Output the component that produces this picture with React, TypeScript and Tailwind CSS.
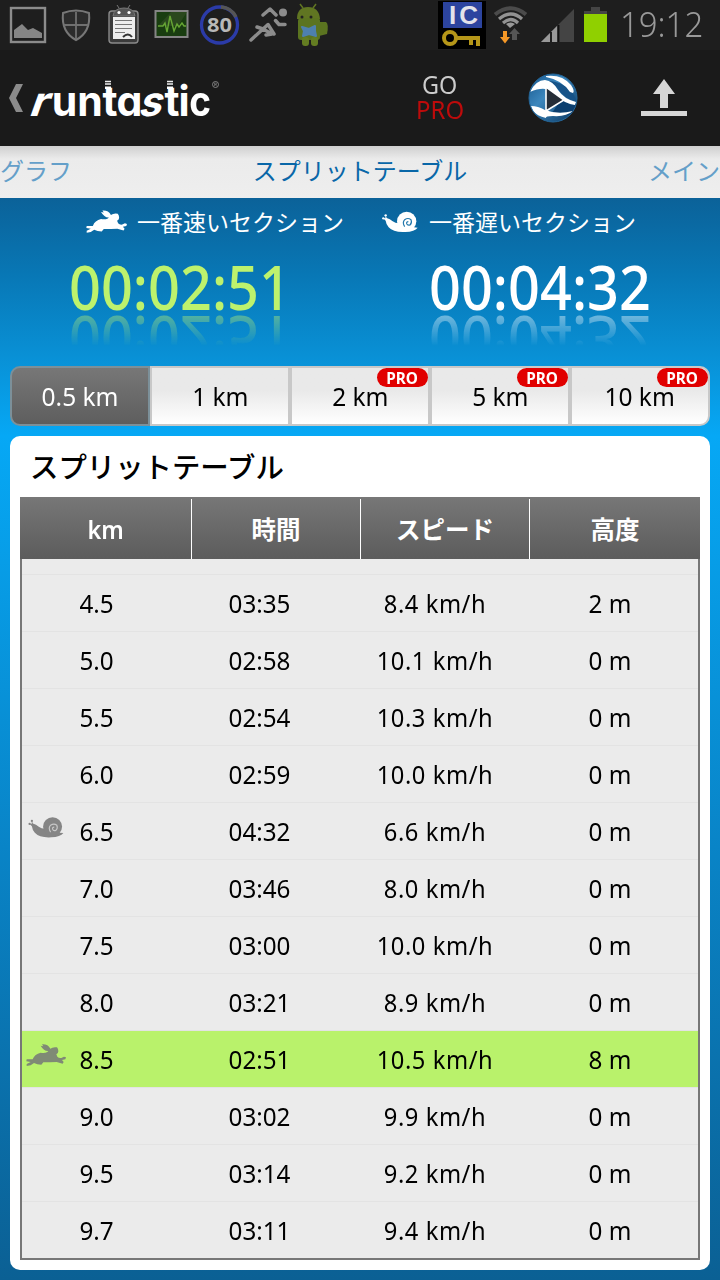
import React from "react";

const rows: [string, string, string, string][] = [
  ["4.5", "03:35", "8.4 km/h", "2 m"],
  ["5.0", "02:58", "10.1 km/h", "0 m"],
  ["5.5", "02:54", "10.3 km/h", "0 m"],
  ["6.0", "02:59", "10.0 km/h", "0 m"],
  ["6.5", "04:32", "6.6 km/h", "0 m"],
  ["7.0", "03:46", "8.0 km/h", "0 m"],
  ["7.5", "03:00", "10.0 km/h", "0 m"],
  ["8.0", "03:21", "8.9 km/h", "0 m"],
  ["8.5", "02:51", "10.5 km/h", "8 m"],
  ["9.0", "03:02", "9.9 km/h", "0 m"],
  ["9.5", "03:14", "9.2 km/h", "0 m"],
  ["9.7", "03:11", "9.4 km/h", "0 m"],
];

const segments = ["0.5 km", "1 km", "2 km", "5 km", "10 km"];

function Hare({ className }: { className: string }) {
  return (
    <svg viewBox="0 0 120 66" className={className} fill="currentColor">
      <path d="M44 5 L52 7 L48 1 Q66 0 73 14 Q80 8 93 10 Q97 14 97 22 Q97 28 91 31 L94 38 Q98 43 106 42 L114 38 L120 40 L118 46 L108 48 L113 54 L110 59 L92 54 L72 55 L52 55 L46 62 L34 61 L24 57 L14 64 L2 66 L2 60 L14 54 L1 52 L2 46 L20 46 Q26 30 44 26 Q56 28 64 24 L67 21 Q54 22 44 5 Z" />
    </svg>
  );
}

function Snail({ className, spiral }: { className: string; spiral: string }) {
  return (
    <svg viewBox="0 0 108 64" className={className} fill="currentColor">
      <circle cx="4" cy="21" r="3.5" />
      <circle cx="11" cy="12" r="3.5" />
      <path d="M3 20 L10 21 L11 12 L14 20 Q24 22 32 30 Q40 36 50 36 L96 48 L107 49 Q98 61 70 62 Q34 64 20 48 Q12 38 11 28 Z" />
      <circle cx="74" cy="30" r="29" />
      <path d="M68 46 Q60 34 68 25 Q78 18 87 25 Q91 34 84 41 Q76 43 74 37 Q73 31 79 31" fill="none" stroke={spiral} strokeWidth="3.5" />
    </svg>
  );
}

function StatusBar() {
  return (
    <div className="flex h-[50px] items-center bg-[#1e1e1e]">
      <svg width="340" height="50" viewBox="0 0 340 50" className="shrink-0">
        <rect x="11" y="8" width="34" height="34" fill="none" stroke="#8c8c8c" strokeWidth="2.4" />
        <path d="M14 38V30L22 24L28 30L33 28L42 33V38Z" fill="#858585" />
        <path d="M63 13Q76 8 89 13Q91 32 76 40Q61 32 63 13Z" fill="#2c2c2c" stroke="#777" strokeWidth="2" />
        <path d="M76 12V39M64 25H88" stroke="#707070" strokeWidth="1.8" />
        <rect x="109" y="11" width="29" height="32" rx="3" fill="#3b3b3b" stroke="#8a8a8a" strokeWidth="1.4" />
        <path d="M113 16Q114 8 124 8Q134 8 135 16Z" fill="#555" stroke="#777" />
        <path d="M117 5L119 8M130 5L128 8" stroke="#777" />
        <circle cx="119" cy="12.5" r="1.6" fill="#fff" /><circle cx="129" cy="12.5" r="1.6" fill="#fff" />
        <rect x="113" y="17" width="22" height="22" fill="#eee" />
        <path d="M115 20.500H132M115 24.500H132M115 28.500H132M115 32.500H125" stroke="#777" strokeWidth="1" />
        <path d="M123 37Q128 32 132 37" stroke="#333" strokeWidth="2" fill="none" />
        <rect x="155.500" y="11" width="32" height="26" fill="#193d10" stroke="#858585" strokeWidth="2" />
        <path d="M171 12H187L178 26H158Z" fill="#355027" opacity=".6" />
        <path d="M158 26H163L165 23L167 32L170 16L174 31L177 24L179 27L182 23L184 26H186" fill="none" stroke="#66a534" strokeWidth="1.4" />
        <circle cx="219.500" cy="25" r="18" fill="none" stroke="#2b3ba8" strokeWidth="3.3" />
        <path d="M221 7A18 18 0 0 1 236 17" fill="none" stroke="#555" strokeWidth="3.3" />
        <text x="219.500" y="32" textAnchor="middle" fill="#b8b8b8" fontFamily="Noto Sans" fontWeight="700" fontSize="20" textLength="25" lengthAdjust="spacingAndGlyphs">80</text>
        <circle cx="283" cy="12.500" r="4" fill="#8c8c8c" />
        <path d="M263 15L270 9L276 15M275.500 20.500L279 24.500H285M251 40L263 29M257 27L263 29L272 34L266 35M263 29L268 24.500L274 34" fill="none" stroke="#8c8c8c" strokeWidth="3.500" strokeLinejoin="round" strokeLinecap="round" />
        <path d="M297 19Q297 7 308 7Q319 7 320 19Z" fill="#607522" />
        <path d="M300 4L303 8M316 4L313 8" stroke="#607522" strokeWidth="1.5" />
        <rect x="298" y="18" width="22" height="22" rx="3" fill="#5b7420" />
        <path d="M320 22H326Q329 24 327 34L319 36Z" fill="#5b7420" />
        <rect x="302" y="37" width="7" height="9" rx="3" fill="#647d22" /><rect x="311" y="37" width="7" height="9" rx="3" fill="#647d22" />
        <path d="M302 27L309 29L315 26L315 31L316 36L309 34L303 36L304 31Z" fill="#4e80ae" stroke="#4e80ae" strokeWidth="2" strokeLinejoin="round" />
        <circle cx="302" cy="17" r="1.500" fill="#222" /><circle cx="311" cy="17" r="1.500" fill="#222" />
      </svg>
      <svg width="184" height="50" viewBox="434 0 184 50" className="ml-[94px] shrink-0">
        <rect x="438" y="1" width="48" height="48" fill="#000" />
        <rect x="443" y="2" width="39" height="26" fill="#2c449f" />
        <text x="449" y="24" fill="#e2e2ea" fontFamily="Liberation Sans" fontWeight="700" fontSize="26" textLength="29">IC</text>
        <circle cx="450" cy="38" r="6" fill="none" stroke="#b59619" strokeWidth="4" />
        <path d="M456 38H478V46M471 38V45" fill="none" stroke="#b59619" strokeWidth="4" />
        <path d="M495 14.500Q511 2 526 14.500" fill="none" stroke="#4b4b4b" strokeWidth="4" />
        <path d="M499 19Q511 9 522 19M503 23Q511 16 518 23" fill="none" stroke="#929292" strokeWidth="3.200" />
        <path d="M506 24Q511 21 515 24L510 28Z" fill="#999" />
        <path d="M503 31H507V37H510L505 43.500L500 37H503Z" fill="#f59827" />
        <path d="M512 40V34H509L514.500 28L520 34H517V40Z" fill="#555" />
        <path d="M574 9V42H541Z" fill="#444" />
        <path d="M557 26V42H541Z" fill="#999" />
        <path d="M551 32V42M558.500 25V42" stroke="#111" strokeWidth="1.8" />
        <path d="M584 14V11H591V7H600V11H607V14Z" fill="#444" /><path d="M584 14H607V42H584Z" fill="#90d000" />
      </svg>
      <span className="relative -top-px ml-[2px] origin-left scale-x-[0.94] font-['Noto_Sans',sans-serif] text-[35px] font-[350] leading-[50px] whitespace-nowrap text-[#999]">19:12</span>
    </div>
  );
}

function Header() {
  return (
    <header className="flex h-24 items-center bg-[#1a1a1a]">
      <svg width="14" height="30" viewBox="0 0 14 30" className="ml-[9px] shrink-0"><path d="M7 1H14L7 15L14 29H7L0 15Z" fill="#8b8b8b" /></svg>
      <div className="relative ml-[9px] h-24 w-[190px]">
        <div className="flex pt-[16px] font-['Inter',sans-serif] text-[41px] font-bold leading-[70px] whitespace-nowrap text-white [font-feature-settings:'cv11']">
          <span className="flex w-[20px] justify-center"><span className="-skew-x-[18deg] scale-x-110">r</span></span>
          <span className="flex w-[25px] justify-center">u</span>
          <span className="flex w-[26px] justify-center">n</span>
          <span className="flex w-[14px] justify-center">t</span>
          <span className="flex w-[25px] justify-center">a</span>
          <span className="flex w-[23px] justify-center"><span className="-skew-x-[18deg]">s</span></span>
          <span className="flex w-[14px] justify-center">t</span>
          <span className="flex w-[10px] justify-center">i</span>
          <span className="flex w-[22px] justify-center"><span className="scale-x-90">c</span></span>
        </div>
        <svg width="190" height="96" viewBox="32 50 190 96" className="absolute top-0 left-0">
          <path d="M105 81.500H111M105 84H111M167 81.500H173M167 84H173" stroke="#eee" strokeWidth="1.400" />
          <path d="M105 86.500H111V89H105ZM167 86.500H173V89H167Z" fill="#fff" />
          <circle cx="215.500" cy="84.500" r="3" fill="none" stroke="#999" strokeWidth=".8" />
          <path d="M214.500 86V83H216.300L216.500 84.500H215L216.800 86" fill="none" stroke="#999" strokeWidth=".5" />
        </svg>
      </div>
      <div className="ml-[168px] flex w-[100px] flex-col items-center pb-[2px] font-['Noto_Sans',sans-serif] text-[26px] leading-[25px]">
        <span className="scale-x-[0.9] text-[#ccc]">GO</span>
        <span className="scale-x-[0.92] text-[#bd0b0b]">PRO</span>
      </div>
      <svg width="50" height="50" viewBox="0 0 50 50" className="ml-[38px] shrink-0">
        <defs>
          <linearGradient id="ball" x1="0" y1="0" x2="1" y2="1"><stop offset="0" stopColor="#16558c" /><stop offset=".4" stopColor="#3c87bd" /><stop offset="1" stopColor="#07345f" /></linearGradient>
          <clipPath id="disc"><circle cx="25" cy="25" r="23.500" /></clipPath>
        </defs>
        <circle cx="25" cy="25" r="24" fill="url(#ball)" stroke="#25679a" strokeWidth="1" />
        <g clipPath="url(#disc)">
          <path d="M20 8Q36 8 46 22L49 29Q36 26 28 14Z" fill="#175388" />
          <path d="M34 25Q44 36 50 30L46 42Q34 42 24 40Z" fill="#0b3e6e" />
          <path d="M2 19Q8 7 17 7Q25 8 30 17Q36 26 48 29L47 32Q37 31 29 23Q20 11 2 19Z" fill="#fff" />
          <path d="M18 3Q34 1 43 12Q47 18 45 20L42 19Q34 7 18 4Z" fill="#fff" />
          <path d="M3 33Q10 33 17 37Q30 42 45 38Q38 44 25 43Q17 43 18 45Q9 43 5 38Z" fill="#fff" />
        </g>
        <path d="M18 14L36 27L18 38Z" fill="#252d37" stroke="#fff" strokeWidth="1.600" />
      </svg>
      <svg width="46" height="38" viewBox="0 0 46 38" className="ml-[63px] shrink-0"><path d="M23 0L34 15H27V29H19V15H12ZM0 32H46V37H0Z" fill="#d6d6d6" /></svg>
    </header>
  );
}

function Best({ label, time, fast }: { label: string; time: string; fast?: boolean }) {
  return (
    <div className="flex w-[360px] flex-col">
      <div className={fast ? "flex h-[48px] items-center pl-[86px]" : "flex h-[48px] items-center pl-[22px]"}>
        {fast ? <Hare className="mt-[-2px] h-[23px] w-[41px] text-white" /> : <Snail className="h-[22px] w-[36px] text-white" spiral="#2378ac" />}
        <span className={fast ? "ml-[10px] text-[23px] leading-[48px] whitespace-nowrap text-white" : "ml-[11px] text-[23px] leading-[48px] whitespace-nowrap text-white"}>{label}</span>
      </div>
      <div className={fast ? "pl-[69px] text-[#bdf26d]" : "pl-[69px] text-white"}>
        <div className="w-fit origin-left scale-x-[0.893] text-[62.500px] font-[550] leading-[79px] whitespace-nowrap [-webkit-box-reflect:below_-24px_linear-gradient(to_bottom,transparent_43%,rgba(0,0,0,.4)_80%)]">{time}</div>
      </div>
    </div>
  );
}

export default function App() {
  return (
    <div className="h-[1280px] w-[720px] overflow-hidden bg-[#1a1a1a] font-['Noto_Sans','Noto_Sans_CJK_JP',sans-serif] text-black">
      <StatusBar />
      <Header />
      <nav className="grid h-[52px] grid-cols-3 bg-linear-to-b from-[#cfcfcf] via-[#ebebeb] via-25% to-[#eee] text-[24px] leading-[49px] whitespace-nowrap text-[#649fc9]">
        <span>グラフ</span>
        <span className="text-center text-[#0967a8]">スプリットテーブル</span>
        <span className="text-right">メイン</span>
      </nav>
      <main className="flex h-[1082px] flex-col bg-[linear-gradient(to_bottom,#0b6299_0%,#0877b5_7%,#0990d5_14.500%,#06a8f5_22%,#0984c7_60%,#0b6094_100%)]">
        <section className="flex h-[168px]">
          <Best label="一番速いセクション" time="00:02:51" fast />
          <Best label="一番遅いセクション" time="00:04:32" />
        </section>
        <section className="mx-[10px] flex h-[60px] shrink-0">
          {segments.map((s, i) => (
            <div
              key={s}
              className={
                "relative flex w-[140px] items-center justify-center border-2 text-[25.5px] " +
                (i === 0
                  ? "rounded-l-[10px] border-[#7c9099] bg-linear-to-b from-[#777] to-[#5e5e5e] text-white"
                  : "border-[#c8c8c8] bg-linear-to-b from-[#e9e9e9] from-40% to-white " + (i === 4 ? "rounded-r-[10px]" : ""))
              }
            >
              <span className="scale-x-[0.96]">{s}</span>
              {i > 1 && (
                <span className="absolute top-0 right-0 flex h-[19px] w-[51px] items-center justify-center rounded-full bg-[#e10000] text-[16.500px] leading-[19px] font-bold text-white">
                  <span className="scale-x-[0.93]">PRO</span>
                </span>
              )}
            </div>
          ))}
        </section>
        <section className="mx-[10px] mt-[10px] h-[834px] shrink-0 rounded-[10px] bg-white px-[10px]">
          <h2 className="h-[61px] pl-[10px] text-[28.400px] font-medium leading-[62px]">スプリットテーブル</h2>
          <div className="h-[763px] border-2 border-[#777] bg-[#ebebeb]">
            <div className="-mx-[2px] -mt-[2px] grid h-[62px] grid-cols-[172px_169px_169px_170px] bg-linear-to-b from-[#777] to-[#5c5c5c] pt-[2px] text-center text-[24.500px] font-bold leading-[62px] text-white">
              <div className="h-[60px] border-r border-white font-semibold"><span className="inline-block scale-x-[0.92] text-[25.500px] leading-[60px]">km</span></div>
              <div className="h-[60px] border-r border-white">時間</div>
              <div className="h-[60px] border-r border-white">スピード</div>
              <div className="h-[60px]">高度</div>
            </div>
            <div className="h-[15px]" />
            {rows.map((r) => (
              <div
                key={r[0]}
                className={
                  "relative grid h-[57px] grid-cols-[149px_177px_174px_176px] border-t border-[#e3e3e3] text-center text-[25.5px] leading-[56px] whitespace-nowrap " +
                  (r[0] === "8.5" ? "bg-[#b9f26b]" : "")
                }
              >
                {r[0] === "6.5" && <Snail className="absolute top-[14px] left-[6px] h-[21px] w-[36px] text-[#858585]" spiral="#c8c8c8" />}
                {r[0] === "8.5" && <Hare className="absolute top-[13px] left-[4px] h-[22px] w-[40px] text-[#7f8a75]" />}
                {r.map((c, i) => (
                  <span key={i} className={i === 2 ? "scale-x-[0.93] tracking-[0.6px]" : "scale-x-[0.95]"}>{c}</span>
                ))}
              </div>
            ))}
          </div>
        </section>
      </main>
    </div>
  );
}
